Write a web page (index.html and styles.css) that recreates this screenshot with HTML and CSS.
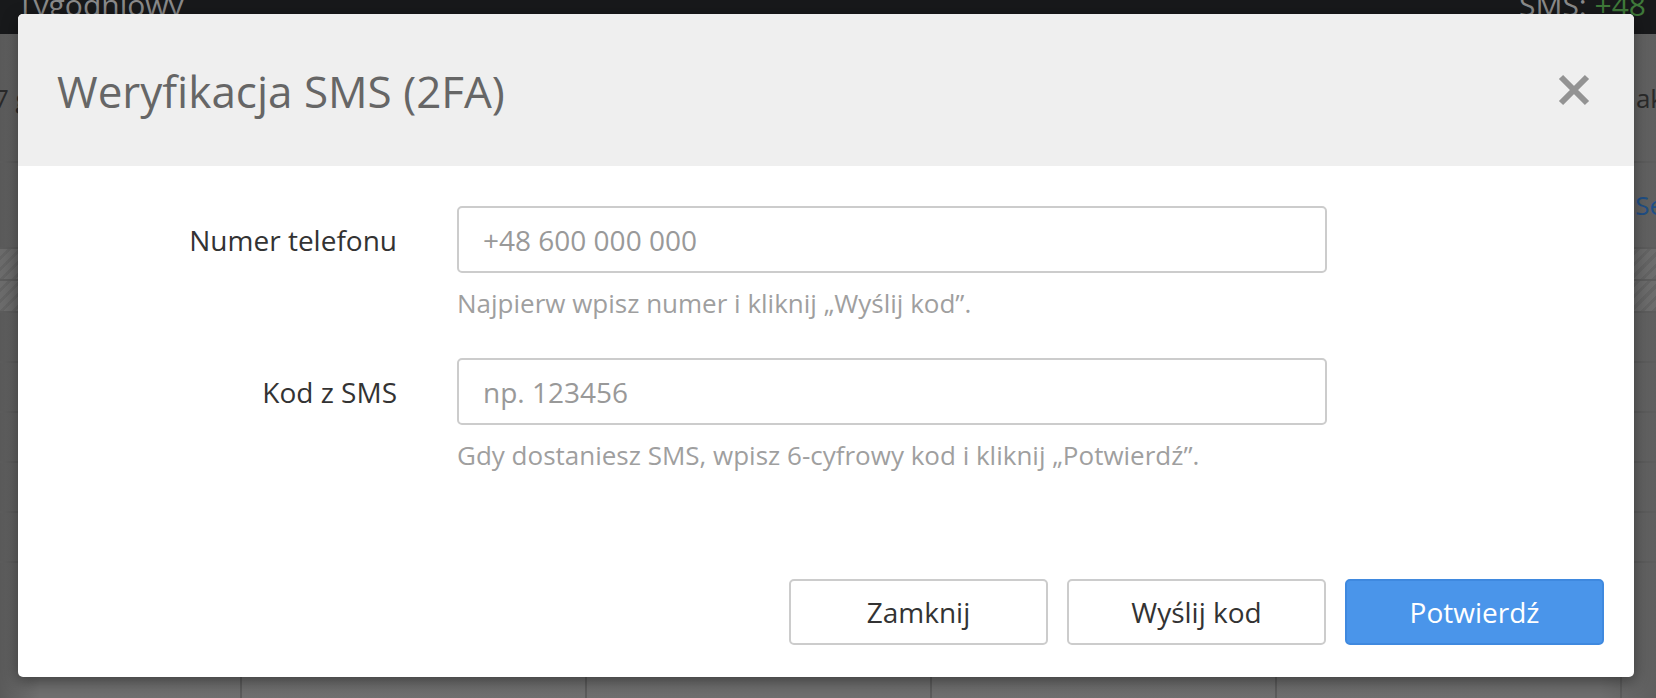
FILE: index.html
```html
<!DOCTYPE html>
<html lang="pl">
<head>
<meta charset="utf-8">
<title>Weryfikacja SMS (2FA)</title>
<link rel="stylesheet" href="styles.css">
</head>
<body>
<div class="page">
  <div class="topbar">
    <span class="topbar-title">Tygodniowy</span>
    <span class="topbar-sms">SMS: <span class="sms-ok">+48</span></span>
  </div>
  <div class="content">
    <div class="row row-a"><span class="cell-left">7 g</span><span class="cell-right">ak</span></div>
    <div class="row row-b"><span class="cell-left link">l</span><span class="cell-right link">Se</span></div>
    <div class="row row-hatch"></div>
    <div class="row row-hatch"></div>
    <div class="row"></div>
    <div class="row"></div>
    <div class="row"></div>
    <div class="row"></div>
    <div class="row"></div>
    <div class="row row-cols"><span></span><span></span><span></span><span></span><span></span></div>
  </div>
</div>

<div class="modal" role="dialog" aria-labelledby="modal-title">
  <div class="modal-header">
    <h4 class="modal-title" id="modal-title">Weryfikacja SMS (2FA)</h4>
    <button class="modal-close" type="button" aria-label="Zamknij">
      <svg width="32" height="32" viewBox="0 0 32 32" aria-hidden="true">
        <path d="M3 3 L29 29 M29 3 L3 29" stroke="#939393" stroke-width="6" stroke-linecap="butt" fill="none"/>
      </svg>
    </button>
  </div>
  <div class="modal-body">
    <div class="form-row">
      <label class="form-label" for="phone">Numer telefonu</label>
      <div class="form-field">
        <input class="form-input" id="phone" type="text" placeholder="+48 600 000 000">
        <p class="form-help">Najpierw wpisz numer i kliknij „Wyślij kod”.</p>
      </div>
    </div>
    <div class="form-row">
      <label class="form-label" for="code">Kod z SMS</label>
      <div class="form-field">
        <input class="form-input" id="code" type="text" placeholder="np. 123456">
        <p class="form-help">Gdy dostaniesz SMS, wpisz 6-cyfrowy kod i kliknij „Potwierdź”.</p>
      </div>
    </div>
  </div>
  <div class="modal-footer">
    <button class="btn" type="button">Zamknij</button>
    <button class="btn" type="button">Wyślij kod</button>
    <button class="btn btn-primary" type="button">Potwierdź</button>
  </div>
</div>
</body>
</html>
```

FILE: styles.css
```css
html, body {
  margin: 0;
  padding: 0;
  height: 100%;
  overflow: hidden;
}

body {
  font-family: "Open Sans", "Noto Sans", "Liberation Sans", sans-serif;
  background: #6c6c6c;
}

/* ---------- page behind the overlay ---------- */
.page {
  height: 100%;
  display: flex;
  flex-direction: column;
}

.topbar {
  height: 34px;
  flex: none;
  background: #18191b;
  display: flex;
  justify-content: space-between;
  align-items: flex-end;
  overflow: hidden;
  padding: 0 20px 0 17px;
}

.topbar-title {
  font-size: 30px;
  line-height: 1;
  color: #8a8a8a;
  margin-bottom: 14px;
}

.topbar-sms {
  font-size: 30px;
  line-height: 1;
  color: #8a8a8a;
  margin-bottom: 14px;
  margin-right: -10px;
}

.sms-ok {
  color: #3f7a3a;
}

.content {
  flex: 1;
  background: linear-gradient(to right, #5a5a5a 0, #707070 40px, #6e6e6e 1600px, #5e5e5e 100%);
  display: flex;
  flex-direction: column;
}

.row {
  height: 48px;
  border-bottom: 2px solid #5c5c5c;
  display: flex;
  justify-content: space-between;
  align-items: center;
  font-size: 26px;
  color: #2a2a2a;
  overflow: hidden;
  flex: none;
}

.row-a {
  height: 127px;
}

.row-b {
  height: 84px;
}

.cell-left {
  margin-left: -6px;
}

.cell-right {
  margin-right: -8px;
}

.link {
  color: #1f4f86;
}

.row-hatch {
  height: 30px;
  background: repeating-linear-gradient(135deg, #6c6c6c 0 5px, #646464 5px 8px);
}

.row-cols {
  flex: 1;
  height: auto;
  border-bottom: none;
  justify-content: flex-start;
  align-items: stretch;
}

.row-cols span {
  width: 343px;
  border-right: 2px solid #5c5c5c;
  flex: none;
}

.row-cols span:first-child {
  width: 240px;
}

/* ---------- modal ---------- */
.modal {
  position: absolute;
  left: 18px;
  top: 14px;
  width: 1616px;
  height: 663px;
  background: #ffffff;
  border-radius: 5px;
  box-shadow: 0 4px 16px rgba(0, 0, 0, 0.45);
  overflow: hidden;
  display: flex;
  flex-direction: column;
}

.modal-header {
  height: 152px;
  flex: none;
  background: #efefef;
  display: flex;
  align-items: center;
  justify-content: space-between;
  padding: 0 44px 0 39px;
  box-sizing: border-box;
}

.modal-title {
  margin: 0;
  font-size: 44px;
  font-weight: 400;
  color: #666666;
  line-height: 1.2;
  padding-top: 2px;
}

.modal-close {
  border: none;
  background: none;
  padding: 0;
  width: 32px;
  height: 32px;
  display: flex;
  cursor: pointer;
}

.modal-body {
  padding-top: 40px;
  display: flex;
  flex-direction: column;
  gap: 38px;
}

.form-row {
  display: grid;
  grid-template-columns: 379px 870px;
  column-gap: 60px;
  align-items: start;
}

.form-label {
  height: 67px;
  display: flex;
  align-items: center;
  justify-content: flex-end;
  font-size: 28px;
  color: #333333;
}

.form-field {
  display: flex;
  flex-direction: column;
}

.form-input {
  height: 67px;
  box-sizing: border-box;
  border: 2px solid #cccccc;
  border-radius: 5px;
  padding: 0 24px;
  font-family: inherit;
  font-size: 28px;
  color: #333333;
  outline: none;
}

.form-input::placeholder {
  color: #999999;
}

.form-help {
  margin: 13px 0 0;
  font-size: 26px;
  line-height: 34px;
  color: #9f9f9f;
}

.modal-footer {
  margin-top: auto;
  padding: 0 30px 32px 0;
  display: flex;
  justify-content: flex-end;
  gap: 19px;
}

.btn {
  width: 259px;
  height: 66px;
  box-sizing: border-box;
  border: 2px solid #cccccc;
  border-radius: 5px;
  background: #ffffff;
  font-family: inherit;
  font-size: 28px;
  color: #333333;
  cursor: pointer;
}

.btn-primary {
  background: #4a95ea;
  border-color: #3f89df;
  color: #ffffff;
}
```
